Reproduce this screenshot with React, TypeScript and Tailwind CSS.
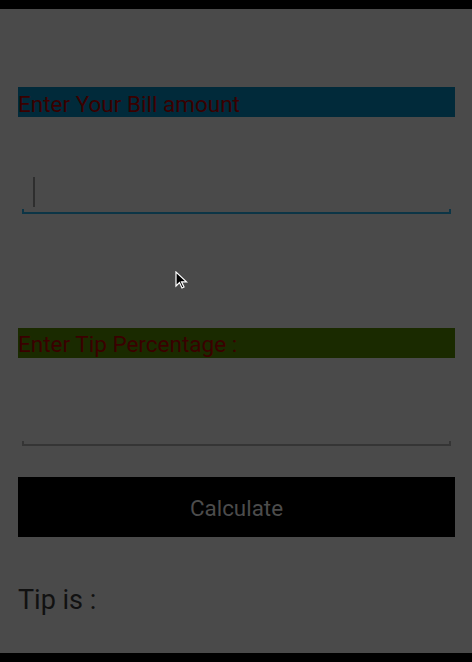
import React from 'react';

function Underline({ color }: { color: string }) {
  return (
    <div className="relative h-[4px] mx-[4px]">
      <div className={`absolute left-0 bottom-0 w-full h-[2px] ${color}`} />
      <div className={`absolute left-0 bottom-0 w-[2px] h-[5px] ${color}`} />
      <div className={`absolute right-0 bottom-0 w-[2px] h-[5px] ${color}`} />
    </div>
  );
}

export default function App() {
  return (
    <div className="w-[472px] h-[662px] bg-black flex flex-col" style={{ fontFamily: 'Roboto, "Noto Sans", sans-serif' }}>
      <div className="h-[9px] bg-black" />
      <div className="relative flex-1 bg-[#4a4a4a] pl-[18px] pr-[17px] pt-[78px] flex flex-col">
        <div className="h-[30px] bg-[#012a3a] text-[#3a0000] text-[22.5px] leading-[30px] pt-[2px]">
          Enter Your Bill amount
        </div>
        <div className="h-[60px]" />
        <div className="relative h-[33px] px-[4px]">
          <div className="absolute left-[15px] top-[0px] w-[2px] h-[30px] bg-[#2e2e2e]" />
        </div>
        <Underline color="bg-[#0c3546]" />
        <div className="h-[114px]" />
        <div className="h-[30px] bg-[#1a2a00] text-[#3a0000] text-[22.5px] leading-[30px] pt-[1px]">
          Enter Tip Percentage :
        </div>
        <div className="h-[84px]" />
        <Underline color="bg-[#353535]" />
        <div className="h-[31px]" />
        <button className="h-[60px] w-full bg-black text-[#4c4c4c] text-[22.4px] flex items-center justify-center pt-[3px]">
          Calculate
        </button>
        <div className="h-[46px]" />
        <div className="text-[#111111] text-[27px] leading-[34px]">Tip is :</div>
        <svg className="absolute left-[175px] top-[262px]" width="14" height="20" viewBox="0 0 14 20">
          <path d="M1 1 L1 15 L4.5 11.5 L7 17 L9 16 L6.5 10.8 L11.5 10.8 Z" fill="#000" stroke="#fff" strokeWidth="1.2" />
        </svg>
      </div>
      <div className="h-[9px] bg-black" />
    </div>
  );
}
